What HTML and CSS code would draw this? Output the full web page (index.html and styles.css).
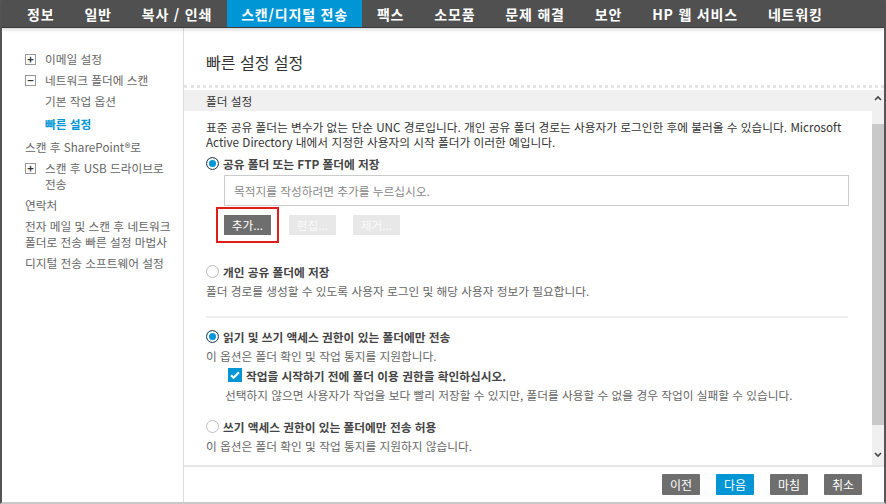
FILE: index.html
```html
<!DOCTYPE html>
<html lang="ko">
<head>
<meta charset="utf-8">
<link rel="stylesheet" href="styles.css">
</head>
<body>
<div class="app">
  <nav class="topnav">
    <span class="tab">정보</span>
    <span class="tab">일반</span>
    <span class="tab">복사 / 인쇄</span>
    <span class="tab active">스캔/디지털 전송</span>
    <span class="tab">팩스</span>
    <span class="tab">소모품</span>
    <span class="tab">문제 해결</span>
    <span class="tab">보안</span>
    <span class="tab">HP 웹 서비스</span>
    <span class="tab">네트워킹</span>
  </nav>
  <div class="body">
    <aside class="sidebar">
      <div class="side-item"><span class="tog">+</span><span>이메일 설정</span></div>
      <div class="side-item"><span class="tog">−</span><span>네트워크 폴더에 스캔</span></div>
      <div class="side-item sub"><span>기본 작업 옵션</span></div>
      <div class="side-item sub current"><span>빠른 설정</span></div>
      <div class="side-item"><span>스캔 후 SharePoint®로</span></div>
      <div class="side-item"><span class="tog">+</span><span>스캔 후 USB 드라이브로 전송</span></div>
      <div class="side-item"><span>연락처</span></div>
      <div class="side-item"><span>전자 메일 및 스캔 후 네트워크 폴더로 전송 빠른 설정 마법사</span></div>
      <div class="side-item"><span>디지털 전송 소프트웨어 설정</span></div>
    </aside>
    <main class="main">
      <h1 class="title">빠른 설정 설정</h1>
      <div class="scroll-area">
        <div class="content">
          <div class="section-head">폴더 설정</div>
          <div class="section-body">
            <p class="intro">표준 공유 폴더는 변수가 없는 단순 UNC 경로입니다. 개인 공유 폴더 경로는 사용자가 로그인한 후에 불러올 수 있습니다. Microsoft Active Directory 내에서 지정한 사용자의 시작 폴더가 이러한 예입니다.</p>
            <label class="opt"><span class="radio on"></span><b>공유 폴더 또는 FTP 폴더에 저장</b></label>
            <div class="dest-box">목적지를 작성하려면 추가를 누르십시오.</div>
            <div class="btn-row">
              <span class="focus-ring"><span class="btn dark">추가...</span></span>
              <span class="btn disabled edit">편집...</span>
              <span class="btn disabled remove">제거...</span>
            </div>
            <label class="opt gap-top"><span class="radio"></span><b>개인 공유 폴더에 저장</b></label>
            <p class="desc">폴더 경로를 생성할 수 있도록 사용자 로그인 및 해당 사용자 정보가 필요합니다.</p>
            <hr class="sep">
            <label class="opt"><span class="radio on"></span><b>읽기 및 쓰기 액세스 권한이 있는 폴더에만 전송</b></label>
            <p class="desc">이 옵션은 폴더 확인 및 작업 통지를 지원합니다.</p>
            <label class="check"><span class="checkbox"><svg viewBox="0 0 14 14" width="14" height="14"><path d="M3 7.2l2.6 2.6L11 4.2" fill="none" stroke="#fff" stroke-width="2.2"/></svg></span><b>작업을 시작하기 전에 폴더 이용 권한을 확인하십시오.</b></label>
            <p class="desc indent">선택하지 않으면 사용자가 작업을 보다 빨리 저장할 수 있지만, 폴더를 사용할 수 없을 경우 작업이 실패할 수 있습니다.</p>
            <label class="opt gap-top2"><span class="radio"></span><b>쓰기 액세스 권한이 있는 폴더에만 전송 허용</b></label>
            <p class="desc">이 옵션은 폴더 확인 및 작업 통지를 지원하지 않습니다.</p>
          </div>
        </div>
        <div class="scrollbar">
          <span class="arrow up"><svg viewBox="0 0 8 6" width="8" height="6"><path d="M1 5l3-3 3 3" fill="none" stroke="#444" stroke-width="1.6"/></svg></span>
          <div class="track"><div class="thumb"></div></div>
          <span class="arrow down"><svg viewBox="0 0 8 6" width="8" height="6"><path d="M1 1l3 3 3-3" fill="none" stroke="#444" stroke-width="1.6"/></svg></span>
        </div>
      </div>
      <footer class="footer">
        <span class="fbtn">이전</span>
        <span class="fbtn primary">다음</span>
        <span class="fbtn">마침</span>
        <span class="fbtn">취소</span>
      </footer>
    </main>
  </div>
</div>
</body>
</html>
```

FILE: styles.css
```css
* { box-sizing: border-box; }
html, body { margin: 0; padding: 0; }
body {
  font-family: "Noto Sans CJK KR", "Noto Sans", sans-serif;
  color: #333;
  background: #fff;
  width: 886px;
  height: 504px;
  overflow: hidden;
  word-break: keep-all;
}
.app {
  height: 504px;
  display: flex;
  flex-direction: column;
  border-left: 2px solid #555;
  border-right: 2px solid #555;
  border-bottom: 2px solid #c8c8c8;
}
.topnav {
  height: 28px;
  background: #505050;
  display: flex;
  align-items: stretch;
  padding-left: 10px;
  border-bottom: 1px solid #3a3a3a;
  box-shadow: 0 2px 3px rgba(0,0,0,0.15);
  position: relative;
  z-index: 1;
  flex: none;
}
.tab {
  color: #fff;
  font-weight: bold;
  font-size: 14px;
  padding: 0 15px;
  display: flex;
  align-items: center;
  white-space: nowrap;
  letter-spacing: 0.8px;
}
.tab.active { background: #0096d6; padding: 0 14px 0 14px; }
.body {
  flex: 1;
  display: flex;
  min-height: 0;
}
.sidebar {
  width: 182px;
  flex: none;
  border-right: 1px solid #ddd;
  padding: 23px 10px 0 23px;
  font-size: 11.7px;
  color: #666;
}
.side-item {
  display: flex;
  align-items: flex-start;
  line-height: 16px;
  margin-bottom: 5px;
}
.side-item.sub { padding-left: 20px; margin-bottom: 7px; }
.side-item.current { color: #0096d6; font-weight: bold; }
.tog {
  width: 11px;
  height: 11px;
  border: 1px solid #999;
  flex: none;
  margin: 3px 9px 0 0;
  font-size: 11px;
  line-height: 9px;
  text-align: center;
  color: #333;
  font-weight: bold;
}
.main {
  flex: 1;
  display: flex;
  flex-direction: column;
  min-width: 0;
}
.title {
  margin: 0;
  height: 60px;
  flex: none;
  padding: 22px 0 0 22px;
  font-size: 16px;
  font-weight: normal;
  color: #333;
  border-bottom: 3px dotted #e4e4e4;
}
.scroll-area {
  flex: 1;
  display: flex;
  min-height: 0;
  padding-top: 2px;
}
.content { flex: 1; min-width: 0; }
.section-head {
  background: #f0f0f0;
  height: 21px;
  padding-left: 22px;
  font-size: 11.7px;
  line-height: 21px;
  color: #333;
}
.section-body {
  padding: 8px 22px 0 22px;
  font-size: 11.7px;
}
.intro {
  margin: 0 0 5px;
  line-height: 15px;
  color: #333;
}
.opt, .check {
  display: flex;
  align-items: center;
  height: 18px;
  color: #444;
}
.opt b, .check b { font-weight: bold; }
.radio {
  width: 13px;
  height: 13px;
  border-radius: 50%;
  border: 1px solid #bbb;
  background: #fff;
  margin-right: 4px;
  flex: none;
}
.radio.on {
  border: 1px solid #444;
  background: #0096d6;
  box-shadow: inset 0 0 0 2px #fff;
}
.dest-box {
  margin: 3px 0 0 18px;
  width: 625px;
  height: 31px;
  border: 1px solid #ccc;
  color: #888;
  padding-left: 9px;
  line-height: 29px;
}
.btn-row {
  display: flex;
  align-items: center;
  margin: 1px 0 0 10px;
}
.focus-ring {
  border: 2px solid #e21b1b;
  padding: 6px;
}
.btn {
  display: inline-block;
  width: 47px;
  height: 20px;
  line-height: 20px;
  text-align: center;
  font-size: 11.7px;
  color: #fff;
}
.btn.dark { background: #6e6e6e; }
.btn.disabled { background: #e8e8e8; color: #fafafa; }
.btn.edit { margin-left: 10px; }
.btn.remove { margin-left: 17px; }
.gap-top { margin-top: 19px; }
.gap-top2 { margin-top: 14px; }
.desc {
  margin: 3px 0 0;
  line-height: 16px;
  color: #666;
}
.desc.indent { margin-left: 19px; }
.sep {
  border: none;
  border-top: 2px solid #eee;
  margin: 17px 0 9px;
  width: 642px;
}
.check { margin: 2px 0 1px 22px; }
.checkbox {
  width: 14px;
  height: 14px;
  background: #0096d6;
  margin-right: 4px;
  display: flex;
  flex: none;
}
.scrollbar {
  width: 12px;
  flex: none;
  background: #f0f0f0;
  display: flex;
  flex-direction: column;
  align-items: center;
}
.arrow { height: 16px; display: flex; align-items: center; justify-content: center; }
.arrow.down { height: 12px; margin-bottom: 4px; }
.track { flex: 1; width: 100%; padding: 18px 0 24px; }
.thumb { background: #c9c9c9; height: 100%; }
.footer {
  height: 37px;
  flex: none;
  border-top: 2px solid #e6e6e6;
  display: flex;
  justify-content: flex-end;
  align-items: center;
  padding-right: 22px;
  gap: 16px;
}
.fbtn {
  width: 38px;
  height: 21px;
  line-height: 21px;
  text-align: center;
  background: #6e6e6e;
  color: #fff;
  font-size: 12px;
  border-radius: 1px;
}
.fbtn.primary { background: #0096d6; }
```
